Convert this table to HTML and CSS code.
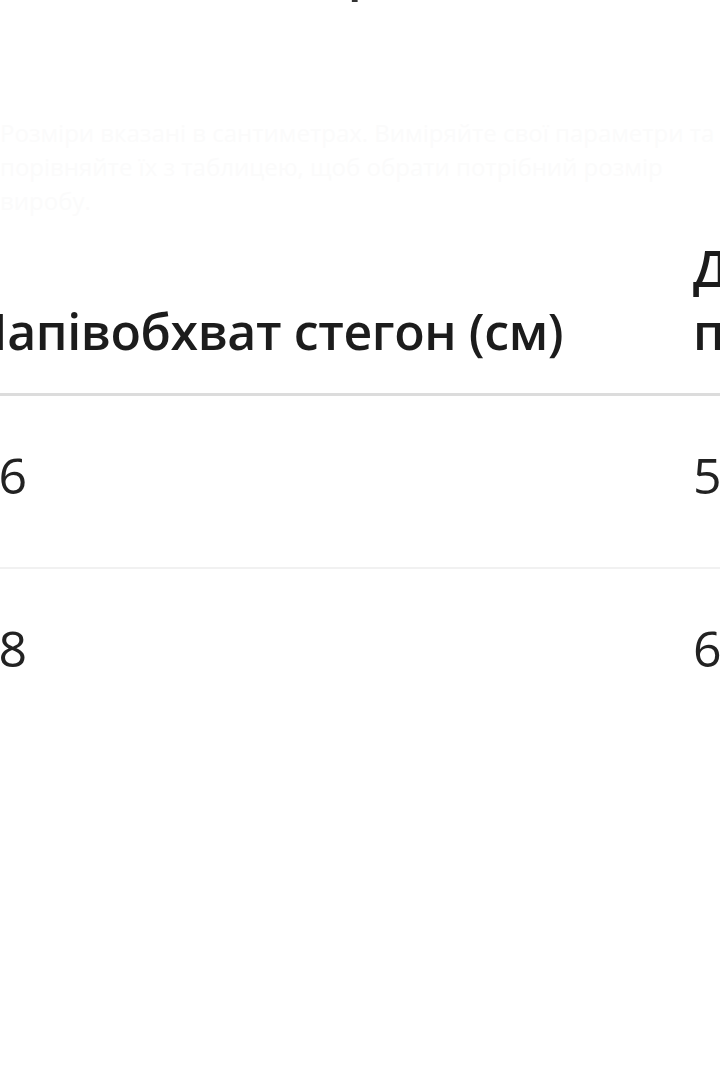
FILE: index.html
```html
<!DOCTYPE html>
<html lang="uk">
<head>
<meta charset="utf-8">
<title>Розмірна сітка</title>
<link rel="stylesheet" href="styles.css">
</head>
<body>
<div class="page">
  <div class="title-row">
    <h2 class="title">Розмірна сітка</h2>
  </div>
  <p class="note">Розміри вказані в сантиметрах. Виміряйте свої параметри та порівняйте їх з таблицею, щоб обрати потрібний розмір виробу.</p>
  <table class="sizes">
    <thead>
      <tr>
        <th class="col-hip">Напівобхват стегон (см)</th>
        <th class="col-len">Довжина<br>по боковому шву (см)</th>
      </tr>
    </thead>
    <tbody>
      <tr>
        <td>46</td>
        <td>54</td>
      </tr>
      <tr>
        <td>48</td>
        <td>62</td>
      </tr>
    </tbody>
  </table>
</div>
</body>
</html>
```

FILE: styles.css
```css
html, body {
  margin: 0;
  padding: 0;
  background: #ffffff;
}

body {
  width: 720px;
  height: 1080px;
  overflow: hidden;
  font-family: "Open Sans", "Noto Sans", sans-serif;
  color: #1c1c1c;
}

.page {
  margin-left: -30px;
  width: 1400px;
}

.title-row {
  display: flex;
  padding-left: 237px;
  margin-top: -54px;
  height: 58px;
}

.title {
  margin: 0;
  font-size: 50px;
  line-height: 50px;
  font-weight: 600;
  color: #333333;
  white-space: nowrap;
}

.note {
  margin: 112px 0 0 30px;
  width: 720px;
  font-size: 24px;
  line-height: 34px;
  color: #fbfbfb;
}

.sizes {
  border-collapse: collapse;
  margin-top: 0;
}

.sizes th,
.sizes td {
  font-size: 50px;
  line-height: 62.5px;
  text-align: left;
  padding: 0;
  white-space: nowrap;
}

.sizes th {
  font-weight: 600;
  letter-spacing: -0.4px;
  vertical-align: bottom;
  padding-top: 19px;
  padding-bottom: 31px;
  border-bottom: 3px solid #dcdcdc;
}

.sizes td {
  font-weight: 400;
  color: #222222;
  vertical-align: top;
  padding-top: 48px;
  padding-bottom: 60px;
  border-bottom: 2px solid #f1f1f1;
}

.sizes tbody tr:last-child td {
  border-bottom: none;
}

.col-hip {
  width: 723px;
}

.col-len {
  width: 600px;
}
```
